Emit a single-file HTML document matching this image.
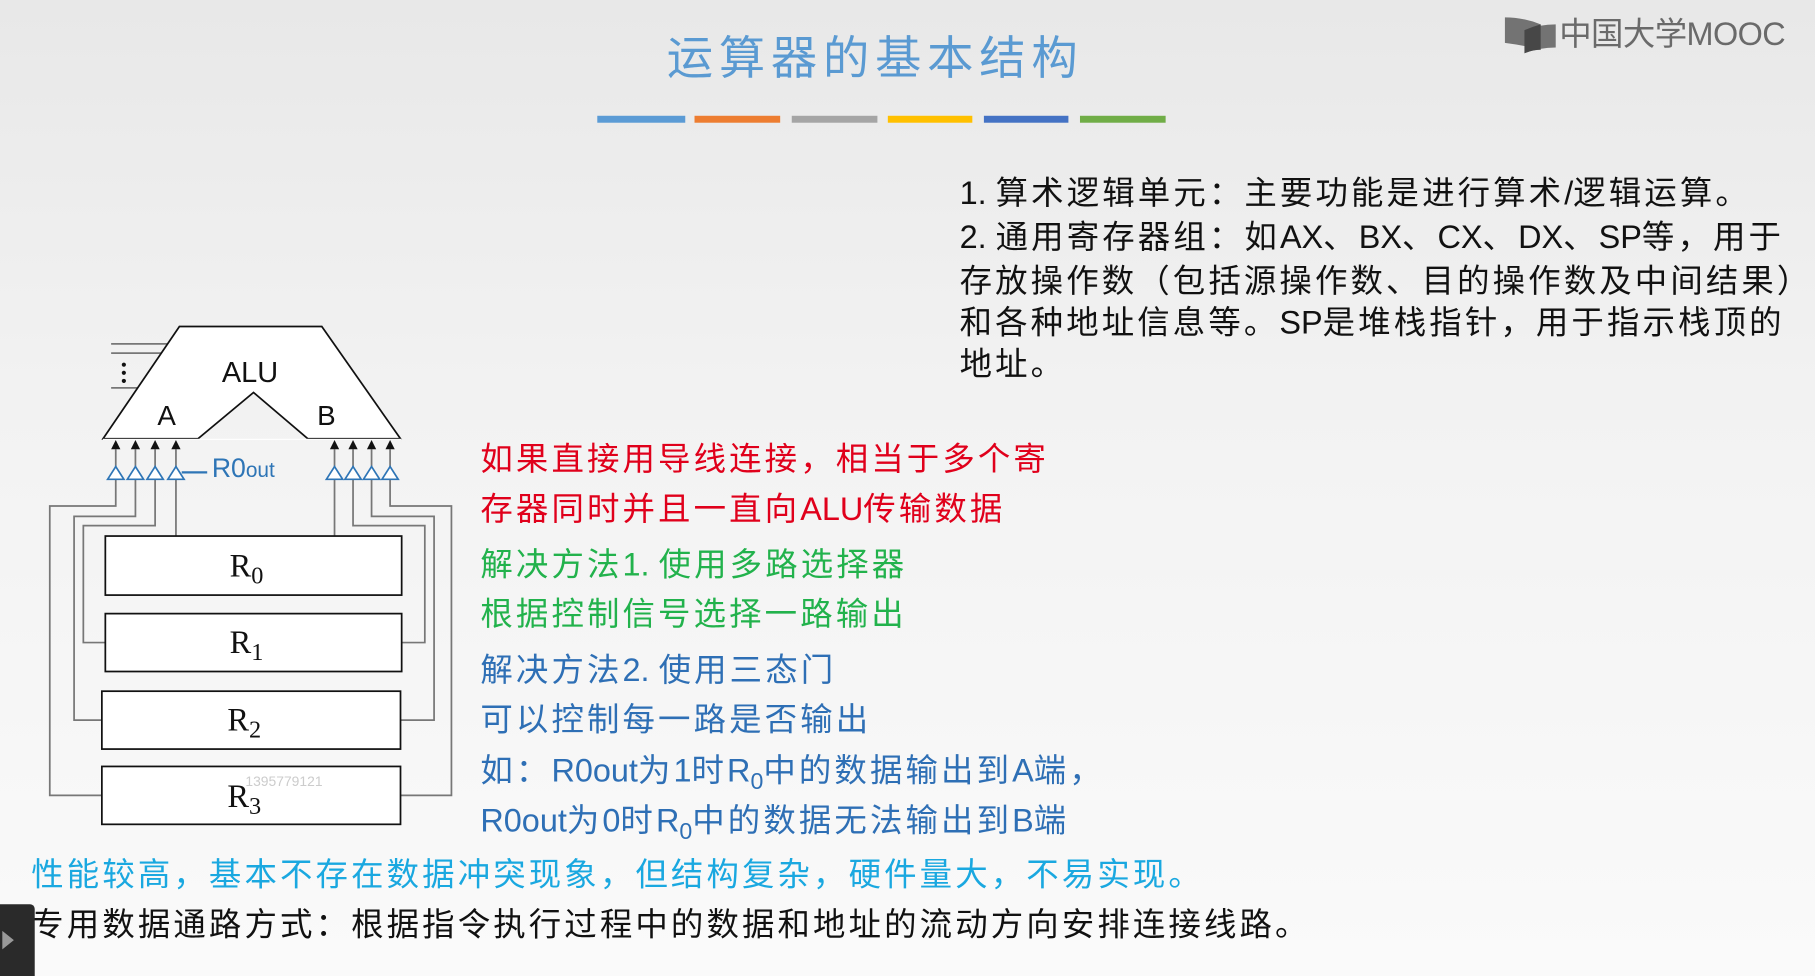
<!DOCTYPE html>
<html><head><meta charset="utf-8"><style>
html,body{margin:0;padding:0;width:1815px;height:976px;overflow:hidden;background:#f5f5f5}
#w{position:absolute;left:0;top:0;width:1568px;height:843px;transform:scale(1.15753,1.15777);transform-origin:0 0;background:linear-gradient(#e8e8e8 0%,#f2f2f2 40%,#fafafa 100%);font-family:"Liberation Sans","Noto Sans CJK SC",sans-serif}
.t{position:absolute;white-space:nowrap;font-size:28px;line-height:36px;letter-spacing:2.7px;margin-top:2px}
.t b{font-weight:normal;letter-spacing:0}
.bar{position:absolute;top:100px;height:6px}
</style></head><body><div id="w">
<div class="t" style="left:576px;top:24px;font-size:40px;line-height:50px;color:#5a9ad2;letter-spacing:5px">运算器的基本结构</div>
<div class="bar" style="left:516px;width:76px;background:#5b9bd5"></div>
<div class="bar" style="left:600px;width:74px;background:#ed7d31"></div>
<div class="bar" style="left:684px;width:74px;background:#a5a5a5"></div>
<div class="bar" style="left:767px;width:73px;background:#ffc000"></div>
<div class="bar" style="left:850px;width:73px;background:#4472c4"></div>
<div class="bar" style="left:933px;width:74px;background:#70ad47"></div>
<svg style="position:absolute;left:1300px;top:13px" width="46" height="36" viewBox="0 0 46 36"><path d="M0 2 Q16 2 31 8 L31 30 Q16 26 0 24Z" fill="#737373"/><path d="M17 13 Q30 8 44 8 L44 28 Q30 28 17 33Z" fill="#737373"/><path d="M17 13 Q24 10 31 8 L31 30 Q24 30 17 33Z" fill="#474747"/></svg>
<div class="t" style="left:1347px;top:10px;font-size:28px;color:#6a6a6a;line-height:36px;letter-spacing:-0.5px">中国大学MOOC</div>
<div class="t" style="left:829px;top:147px;color:#111"><b>1. </b>算术逻辑单元：主要功能是进行算术<b>/</b>逻辑运算。</div>
<div class="t" style="left:829px;top:185px;color:#111"><b>2. </b>通用寄存器组：如<b>AX</b>、<b>BX</b>、<b>CX</b>、<b>DX</b>、<b>SP</b>等，用于</div>
<div class="t" style="left:829px;top:223px;color:#111">存放操作数（包括源操作数、目的操作数及中间结果）</div>
<div class="t" style="left:829px;top:259px;color:#111">和各种地址信息等。<b>SP</b>是堆栈指针，用于指示栈顶的</div>
<div class="t" style="left:829px;top:295px;color:#111">地址。</div>
<div class="t" style="left:415px;top:377px;color:#e0001b">如果直接用导线连接，相当于多个寄</div>
<div class="t" style="left:415px;top:420px;color:#e0001b">存器同时并且一直向<b>ALU</b>传输数据</div>
<div class="t" style="left:415px;top:468px;color:#22b24c">解决方法<b>1. </b>使用多路选择器</div>
<div class="t" style="left:415px;top:511px;color:#22b24c">根据控制信号选择一路输出</div>
<div class="t" style="left:415px;top:559px;color:#2e6fb5">解决方法<b>2. </b>使用三态门</div>
<div class="t" style="left:415px;top:602px;color:#2e6fb5">可以控制每一路是否输出</div>
<div class="t" style="left:415px;top:646px;color:#2e6fb5">如：<b>R0out</b>为<b>1</b>时<b>R<sub style="font-size:20px">0</sub></b>中的数据输出到<b>A</b>端，</div>
<div class="t" style="left:415px;top:689px;color:#2e6fb5"><b>R0out</b>为<b>0</b>时<b>R<sub style="font-size:20px">0</sub></b>中的数据无法输出到<b>B</b>端</div>
<div class="t" style="left:27px;top:736px;color:#1aa8e0">性能较高，基本不存在数据冲突现象，但结构复杂，硬件量大，不易实现。</div>
<div class="t" style="left:27px;top:779px;color:#111">专用数据通路方式：根据指令执行过程中的数据和地址的流动方向安排连接线路。</div>
<div style="position:absolute;left:0;top:781px;width:30px;height:62px;background:#2a2a2a;border-radius:0 4px 0 0"></div>
<svg style="position:absolute;left:0;top:802px" width="14" height="20"><path d="M2 2 L12 10 L2 18Z" fill="#999"/></svg>
<svg style="position:absolute;left:0;top:0" width="420" height="843" viewBox="0 0 420 843" font-family="Liberation Sans, sans-serif">
<g stroke="#777" stroke-width="1.5" fill="none">
<line x1="96" y1="297" x2="150" y2="297"/><line x1="96" y1="305" x2="145" y2="305"/><line x1="96" y1="335" x2="125" y2="335"/>
<path d="M152 388V463M134 388V454H72V555H91M117 388V446H64V622H88M100 388V437H43V687H88"/>
<path d="M289 388V463M305 388V454H367V555H347M321 388V446H375V622H346M337 388V437H390V687H346"/>
</g>
<circle cx="107" cy="315" r="1.8" fill="#111"/><circle cx="107" cy="322" r="1.8" fill="#111"/><circle cx="107" cy="329" r="1.8" fill="#111"/>
<path d="M155 282H278L346 379H266L219 339L171 379H89Z" fill="#fff" stroke="#111" stroke-width="1.5"/>
<rect x="89" y="379" width="258" height="1" fill="#fff"/>
<text x="216" y="330" font-size="25" text-anchor="middle" fill="#111">ALU</text>
<text x="144" y="367" font-size="24" text-anchor="middle" fill="#111">A</text>
<text x="282" y="367" font-size="24" text-anchor="middle" fill="#111">B</text>
<g fill="#111"><path d="M96 388L100 380L104 388Z"/><path d="M113 388L117 380L121 388Z"/><path d="M130 388L134 380L138 388Z"/><path d="M148 388L152 380L156 388Z"/><path d="M285 388L289 380L293 388Z"/><path d="M301 388L305 380L309 388Z"/><path d="M317 388L321 380L325 388Z"/><path d="M333 388L337 380L341 388Z"/></g>
<g fill="#fff" stroke="#2e75b6" stroke-width="1.5"><path d="M93 414L100 403L107 414Z"/><path d="M110 414L117 403L124 414Z"/><path d="M127 414L134 403L141 414Z"/><path d="M145 414L152 403L159 414Z"/><path d="M282 414L289 403L296 414Z"/><path d="M298 414L305 403L312 414Z"/><path d="M314 414L321 403L328 414Z"/><path d="M330 414L337 403L344 414Z"/></g>
<line x1="157" y1="408" x2="179" y2="408" stroke="#2e75b6" stroke-width="2"/>
<text x="183" y="412" font-size="23" fill="#2e75b6">R0<tspan font-size="18">out</tspan></text>
<g fill="#fff" stroke="#111" stroke-width="1.5"><rect x="91" y="463" width="256" height="51"/><rect x="91" y="530" width="256" height="50"/><rect x="88" y="597" width="258" height="50"/><rect x="88" y="662" width="258" height="50"/></g>
<g font-family="Liberation Serif, serif" font-size="28" fill="#111" text-anchor="middle">
<text x="213" y="498">R<tspan font-size="21" dy="6">0</tspan></text>
<text x="213" y="564">R<tspan font-size="21" dy="6">1</tspan></text>
<text x="211" y="631">R<tspan font-size="21" dy="6">2</tspan></text>
<text x="211" y="697">R<tspan font-size="21" dy="6">3</tspan></text></g>
<text x="212" y="679" font-size="12" fill="#ccc">1395779121</text>
</svg>
</div></body></html>
